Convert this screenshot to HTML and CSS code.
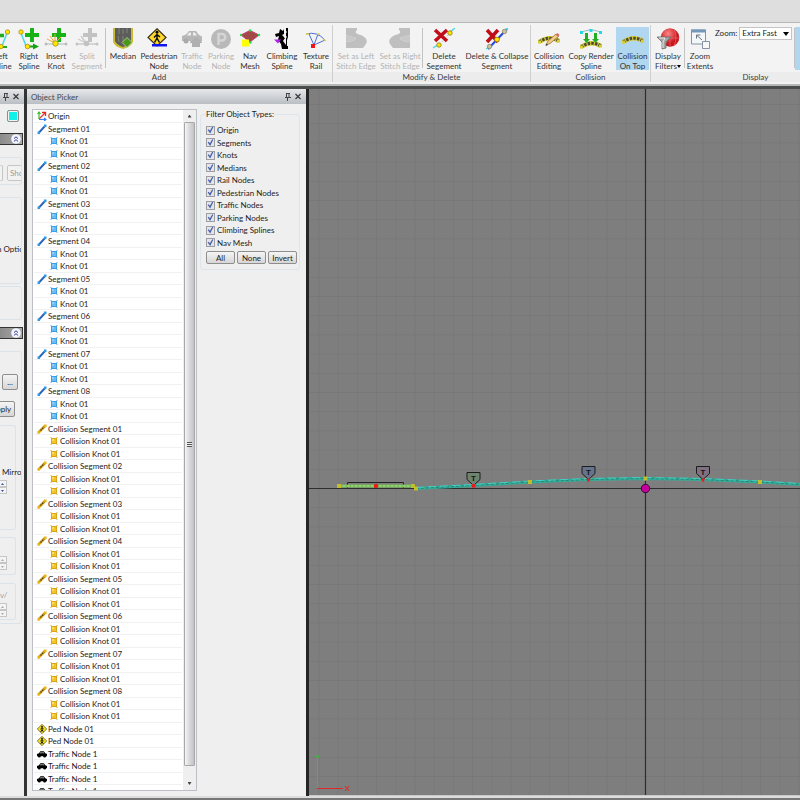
FILE: index.html
```html
<!DOCTYPE html>
<html lang="en">
<head>
<meta charset="utf-8">
<title>Object Picker</title>
<link rel="stylesheet" href="styles.css">
</head>
<body>
<svg class="defs" aria-hidden="true">
  <defs>
    <radialGradient id="redBall" cx=".4" cy=".3"><stop stop-color="#ff8a8a"/><stop offset="1" stop-color="#c8181e"/></radialGradient>
    <symbol id="t-origin" viewBox="0 0 10 10"><path d="M2 8l6-6" stroke="#e33" stroke-width="1.200"/><path d="M2 8V1.500M.5 3L2 1l1.500 2" fill="none" stroke="#2fc42f" stroke-width="1.200"/><path d="M2 8.500h6M7 7l2 1.500L7 10" fill="none" stroke="#3b7ff0" stroke-width="1.200"/><path d="M5 1.500h3.500V5" fill="none" stroke="#e22" stroke-width="1.300"/></symbol>
    <symbol id="t-segment" viewBox="0 0 10 10"><path d="M2 8.500L8.500 1.500" stroke="#2a62b8" stroke-width="1.900"/><path d="M.5 7.500h2.500v2.500H.5zM7 .5h2.500V3H7z" fill="#2f9be8"/></symbol>
    <symbol id="t-knot" viewBox="0 0 10 10"><path d="M2 2h6v6H2z" fill="#3d9ee2"/><path d="M3 3h4v4H3z" fill="#6bbcf2"/><path d="M3 3h2v2H3z" fill="#90d0f8"/><path d="M1 1h2v1H1zM7 1h2v1H7zM1 8h2v1H1zM7 8h2v1H7z" fill="#a9d4f0"/></symbol>
    <symbol id="t-csegment" viewBox="0 0 10 10"><path d="M1.500 8.500L8.500 1.500" stroke="#d6a516" stroke-width="2.600"/><path d="M3.500 6.500L7 3" stroke="#5b4614" stroke-width="1.400" stroke-dasharray="1.500 .8"/><path d="M.3 7.500h2.400v2.300H.3zM7.300.4h2.300v2.300H7.300z" fill="#efb91a"/></symbol>
    <symbol id="t-cknot" viewBox="0 0 10 10"><path d="M2 2h6v6H2z" fill="#dda41a"/><path d="M3 3h4v4H3z" fill="#f2c42c"/><path d="M3 3h2v2H3z" fill="#fae068"/><path d="M1 1h2v1H1zM7 1h2v1H7zM1 8h2v1H1zM7 8h2v1H7z" fill="#efd694"/></symbol>
    <symbol id="t-ped" viewBox="0 0 10 10"><path d="M5 .3L9.700 5 5 9.700.3 5z" fill="#f5e21f" stroke="#554d10" stroke-width=".7"/><circle cx="5" cy="2.500" r=".8"/><path d="M5 3.300v2.500l1.300 2M5 5.800L3.700 8M3.400 5.200L5 3.700l1.600 1.300" fill="none" stroke="#111"/></symbol>
    <symbol id="t-traffic" viewBox="0 0 10 10"><path d="M0 5L2 4.300 3.300 2.300h3.500l1.500 2 1.700.7V7.200H0z"/><path d="M3.600 3.200h1.200v1.100H2.900zM5.300 3.200h1.200l.8 1.100h-2z" fill="#ccc"/><circle cx="2.300" cy="7" r="1.500"/><circle cx="7.600" cy="7" r="1.500"/></symbol>
    <symbol id="pin" viewBox="0 0 8 8"><path d="M2 .5h4M2.500.5v4M5 .5v4M1 4.500h6M3.500 5v3" fill="none" stroke="#444"/></symbol>
    <symbol id="close" viewBox="0 0 8 8"><path d="M1.500 1l5 5M6.500 1l-5 5" stroke="#333" stroke-width="1.100"/></symbol>
    <symbol id="chev" viewBox="0 0 10 10"><circle cx="5" cy="5" r="4.800" fill="#f2f4ff"/><path d="M3 4.600L5 2.800l2 1.800M3 7.400l2-1.800 2 1.800" fill="none" stroke="#333d9c"/></symbol>
    <symbol id="plus" viewBox="0 0 12 12"><path d="M4.300 0h3.400v4.300H12v3.400H7.700V12H4.300V7.700H0V4.300h4.300z"/></symbol>
    <symbol id="road" viewBox="0 0 22 8"><path d="M1 6Q11-1 21 5" fill="none" stroke="#d4c832" stroke-width="4.500"/><path d="M1 6Q11-1 21 5" fill="none" stroke="#4a4a3a" stroke-width="3" stroke-dasharray="2.500 1.200"/><path d="M0 4.500h3v3H0zM19 3.500h3v3h-3z" fill="#d8cf35"/></symbol>
  </defs>
</svg>

<header class="titlebar"></header>

<nav class="ribbon" aria-label="Ribbon">
  <section class="group group-add">
    <div class="tools">
      <button class="tool w28"><svg viewBox="0 0 24 22"><use href="#plus" x="2" y="1" width="13" height="13" fill="#1fae1f"/><path d="M18 5L13 18" stroke="#48dbe6" stroke-width="1.500"/><path d="M4 19h14" stroke="#1fae1f" stroke-width="2"/><g fill="#ffe600" stroke="#a08400" stroke-width=".7"><circle cx="18.500" cy="4" r="2.200"/><circle cx="12" cy="18.500" r="2.200"/></g></svg><span>Left<br>Spline</span></button>
      <button class="tool w28"><svg viewBox="0 0 24 22"><use href="#plus" x="8" y="0" width="14" height="14" fill="#16b316"/><path d="M4 5L9 18" stroke="#48dbe6" stroke-width="1.500"/><path d="M11 18.500h6" stroke="#12a312" stroke-width="2"/><path d="M16 15.500l6 3-6 3z" fill="#12a312"/><g fill="#ffe600" stroke="#a08400" stroke-width=".7"><circle cx="4" cy="4" r="2.200"/><circle cx="10.500" cy="18.500" r="2.300"/></g></svg><span>Right<br>Spline</span></button>
      <button class="tool w26"><svg viewBox="0 0 24 22"><use href="#plus" x="8" y="0" width="14" height="14" fill="#16b316"/><path d="M2 16h20" stroke="#b5cbd0" stroke-width="1.300"/><path d="M11 15L6 8M11 15L3 11M11 15V6M11 15l6-6" stroke="#f0a838"/><g fill="#bcbcbc"><circle cx="2" cy="16" r="1.500"/><circle cx="22" cy="16" r="1.500"/></g><circle cx="11.500" cy="15.500" r="2.700" fill="#ffe600" stroke="#a08400" stroke-width=".7"/></svg><span>Insert<br>Knot</span></button>
      <button class="tool w36" disabled><svg viewBox="0 0 24 22"><use href="#plus" x="8" y="0" width="14" height="14" fill="#c2c2c2"/><path d="M2 16h20M11 15L6 8M11 15L3 11" stroke="#cbcbcb" stroke-width="1.300"/><g fill="#c2c2c2"><circle cx="2" cy="16" r="1.500"/><circle cx="22" cy="16" r="1.500"/><circle cx="11.500" cy="15.500" r="2.700"/></g></svg><span>Split<br>Segment</span></button>
      <i class="sep"></i>
      <button class="tool w34"><svg viewBox="0 0 24 22"><path d="M2 0h20v14q-2 5-10 7Q4 19 2 14z" fill="#c9bd2f"/><path d="M4 0h16v13q-2 4-8 6-6-2-8-6z" fill="#5c5c5a"/><path d="M8 0v6M12 1v5M16 0v5M7 8l1 6M12 8v5" stroke="#85857d"/><path d="M16 9.500l5 5-5 5-5-5z" fill="#4d961c" stroke="#d6e5b3" stroke-width=".7"/></svg><span>Median</span></button>
      <button class="tool w38"><svg viewBox="0 0 24 22"><path d="M10 .8L19 9.500 10 18 1 9.500z" fill="#ffd92e" stroke="#3c3418" stroke-width="1.200"/><circle cx="10" cy="4.200" r="1.400"/><path d="M10 5.500V10l2.500 4.500M10 10l-2.500 4.500M7 9.500l3-3 3 2.500" fill="none" stroke="#111" stroke-width="1.500"/><path d="M5 16h15v2.500H5z" fill="#1018f0"/></svg><span>Pedestrian<br>Node</span></button>
      <button class="tool w28" disabled><svg viewBox="0 0 24 22"><path d="M2 8l4-1.500L9 3h7l3 4 3 1.500V13H2z" fill="#b7b7b7"/><circle cx="6" cy="13" r="2.500" fill="#aaa"/><path d="M9 4.500L7 7.500h4v-3zM13 4.500v3h4l-2-3z" fill="#eee"/><path d="M16 9l6 5v1h-2v4h-8v-4h-2v-1z" fill="#b0b0b0"/></svg><span>Traffic<br>Node</span></button>
      <button class="tool w30" disabled><svg viewBox="0 0 24 22"><circle cx="12" cy="11" r="10" fill="#b9b9b9"/><path d="M9.500 17V6h3.500a3 3 0 0 1 0 6.500H9.500" fill="none" stroke="#d5d5d5" stroke-width="2.500"/></svg><span>Parking<br>Node</span></button>
      <button class="tool w28"><svg viewBox="0 0 24 22"><path d="M3 7l9-4.500L21 7l-9 7z" fill="#a14b49" stroke="#c23a72"/><g fill="#23df48"><circle cx="3" cy="7" r="1.200"/><circle cx="12" cy="2.500" r="1.200"/><circle cx="21" cy="7" r="1.200"/><circle cx="12.500" cy="14.500" r="1.200"/></g><path d="M4 11.500h7v7H4z" fill="#ff0"/></svg><span>Nav<br>Mesh</span></button>
      <button class="tool w36"><svg viewBox="0 0 24 22"><path d="M10 1l3 2 1-2v5l-2 1 3 3-2 3 3 4v4h-4l-1-5-3-4 1-4-3 1-1-3 4-1z"/><path d="M17 0l1 0v9l-1 3v9h-1V0zM12 18h6v3h-6z"/><path d="M14 4h3M14 9h3" stroke="#fff"/><path d="M4 11.500h7l-3 4z" fill="#b220e8"/></svg><span>Climbing<br>Spline</span></button>
      <button class="tool w32"><svg viewBox="0 0 24 22"><path d="M2 6Q13 3 21 12M10 17L5 6M10 17l4-11M10 17l11-5" fill="none" stroke="#4a6cda"/><path d="M2 6h3M13 6h3M19 11l3 2" stroke="#e0d542" stroke-width="1.500"/><path d="M7 16h4v4H7z" fill="#f01616"/></svg><span>Texture<br>Rail</span></button>
    </div>
    <h2>Add</h2>
  </section>
  <section class="group">
    <div class="tools">
      <button class="tool w44" disabled><svg viewBox="0 0 24 22"><path d="M2 0h11v2Q9 5 17 7q8 4 5 9l-3 4H2V14q10-1 10-4L2 7z" fill="#bfbfbf"/><path d="M2 7l10 3q0 3-10 4z" fill="#c8c8c8"/></svg><span>Set as Left<br>Stitch Edge</span></button>
      <button class="tool w44" disabled><svg viewBox="0 0 24 22"><path d="M22 0H11v2q4 3-4 5-8 4-5 9l3 4h17v-6q-10-1-10-4l10-3z" fill="#bfbfbf"/><path d="M22 7l-10 3q0 3 10 4z" fill="#c8c8c8"/></svg><span>Set as Right<br>Stitch Edge</span></button>
      <i class="sep"></i>
      <button class="tool w42"><svg viewBox="0 0 24 22"><path d="M1 20l6-4M17 5l6-5" stroke="#48dbe6" stroke-width="1.500"/><path d="M7 17l11-12" stroke="#bbb" stroke-dasharray="2 2"/><path d="M3 2l12 11M15 2L3 13" stroke="#c00d17" stroke-width="3.500"/><g fill="#ffe600" stroke="#8f7a10" stroke-width=".8"><circle cx="18" cy="5" r="2.200"/><circle cx="7" cy="17" r="2.200"/></g></svg><span>Delete<br>Segement</span></button>
      <button class="tool w63"><svg viewBox="0 0 24 22"><path d="M3 21L22 1" stroke="#2349dd" stroke-width="2"/><path d="M1 21l3-2M20 2l3-2" stroke="#48dbe6" stroke-width="1.500"/><path d="M2 2l11 12M13 2L2 14" stroke="#c00d17" stroke-width="3.500"/><g fill="#c9c3a0" stroke="#8d8767" stroke-width=".8"><circle cx="19.500" cy="3.500" r="2.200"/><circle cx="4.500" cy="18.500" r="2.200"/></g><circle cx="12" cy="11.500" r="2.400" fill="#ffe600" stroke="#8f7a10" stroke-width=".8"/></svg><span>Delete &amp; Collapse<br>Segment</span></button>
    </div>
    <h2>Modify &amp; Delete</h2>
  </section>
  <section class="group">
    <div class="tools">
      <button class="tool w34"><svg viewBox="0 0 24 22"><use href="#road" x="1" y="8" width="22" height="8"/><path d="M9 17l2-4 8-7 2.500 2.500-8.500 7z" fill="#f1cd8c" stroke="#9a7030" stroke-width=".8"/><path d="M18.500 6.500l2-1.500 2 2-1.500 2z" fill="#d86b62"/><path d="M8.500 18l1-2.500 1.500 1.500z" fill="#333"/></svg><span>Collision<br>Editing</span></button>
      <button class="tool w50"><svg viewBox="0 0 24 22"><path d="M2 4l10-2.500L22 4" fill="none" stroke="#9bb8c4"/><g fill="#20d8ea"><path d="M1 3h3v3H1zM10.500 1h3v3h-3zM20 3h3v3h-3z"/></g><use href="#road" x="1" y="13" width="22" height="8"/><path d="M6 5h3v6h2l-3.500 4L4 11h2zM15 5h3v6h2l-3.500 4-3.500-4h2z" fill="#23ad24"/></svg><span>Copy Render<br>Spline</span></button>
      <button class="tool w33 on"><svg viewBox="0 0 24 22"><use href="#road" x="1" y="8" width="22" height="8"/></svg><span>Collision<br>On Top</span></button>
    </div>
    <h2>Collision</h2>
  </section>
  <section class="group group-display">
    <div class="tools">
      <button class="tool w32"><svg viewBox="0 0 24 22"><circle cx="14" cy="9.500" r="9.300" fill="url(#redBall)"/><path d="M9 2q5 8 0 15M5 10h18M14 0v18M18 1q4 8 0 17" fill="none" stroke="#e96a6e" stroke-width=".7"/><path d="M1 9h14l-5 5v6l-4 1v-7z" fill="#a3a3a3" stroke="#6a6a6a" stroke-width=".8"/><path d="M3 10h6l-2 4v6" fill="none" stroke="#e8e8e8"/></svg><span>Display<br>Filters<svg class="caret" viewBox="0 0 4 3"><path d="M0 0h4L2 3z"/></svg></span></button>
      <i class="sep"></i>
      <button class="tool w30"><svg viewBox="0 0 24 22"><path d="M3.500 2h14v14h-14z" fill="#f4f7fa" stroke="#8793a2"/><path d="M3 1.500h15v3H3z" fill="#7497bb"/><path d="M14.500 13.500h7v7h-7z" fill="#f7f7f7" stroke="#8793a2"/><path d="M14 12L9 7.500M8.500 10.500V7h4" fill="none" stroke="#6b737f"/></svg><span>Zoom<br>Extents</span></button>
      <div class="zoom"><label for="zoom">Zoom:</label><div class="select"><select id="zoom"><option>Extra Fast</option></select><svg viewBox="0 0 6 4"><path d="M0 0h6L3 4z"/></svg></div></div>
      <i class="sep"></i>
      <button class="tool w34 on"><svg viewBox="0 0 24 22"><circle cx="10" cy="11" r="8" fill="#bd8"/></svg><span>Grid</span></button>
    </div>
    <h2>Display</h2>
  </section>
</nav>

<main class="workspace">
  <aside class="props">
    <div class="panel-title"><svg><use href="#pin"/></svg><svg><use href="#close"/></svg></div>
    <div class="props-body">
      <div class="swatch-row"><button class="swatch" aria-label="Colour"></button></div>
      <div class="bar"><svg><use href="#chev"/></svg></div>
      <div class="box box-buttons"><button class="btn stub" disabled></button><button class="btn show" disabled>Show</button></div>
      <div class="box box-options"><span>n Options</span></div>
      <div class="box box-tail"></div>
      <div class="bar"><svg><use href="#chev"/></svg></div>
      <div class="box box-apply">
        <div class="row row-more"><button class="btn">...</button></div>
        <div class="row row-apply"><button class="btn">Apply</button></div>
        <div class="inner inner-mirror"><p>Mirro</p><span class="spin live"><b></b><b></b></span></div>
        <div class="inner inner-mid"><span class="spin"><b></b><b></b></span></div>
        <div class="inner inner-end"><p>v/</p><span class="spin"><b></b><b></b></span></div>
      </div>
    </div>
  </aside>

  <aside class="picker">
    <div class="panel-title"><h1>Object Picker</h1><svg><use href="#pin"/></svg><svg><use href="#close"/></svg></div>
    <div class="picker-body">
      <div class="list">
        <ul class="tree" id="tree"></ul>
        <div class="scroll"><span class="arrow up"></span><div class="thumb"><i></i></div><span class="arrow down"></span></div>
      </div>
      <fieldset class="filters">
        <legend>Filter Object Types:</legend>
        <label><input type="checkbox" checked>Origin</label>
        <label><input type="checkbox" checked>Segments</label>
        <label><input type="checkbox" checked>Knots</label>
        <label><input type="checkbox" checked>Medians</label>
        <label><input type="checkbox" checked>Rail Nodes</label>
        <label><input type="checkbox" checked>Pedestrian Nodes</label>
        <label><input type="checkbox" checked>Traffic Nodes</label>
        <label><input type="checkbox" checked>Parking Nodes</label>
        <label><input type="checkbox" checked>Climbing Splines</label>
        <label><input type="checkbox" checked>Nav Mesh</label>
        <div class="actions"><button class="btn">All</button><button class="btn">None</button><button class="btn">Invert</button></div>
      </fieldset>
    </div>
  </aside>

  <section class="viewport" aria-label="Viewport">
    <svg class="scene">
      <defs><pattern id="grid" x="9.500" y="15" width="19.200" height="19.200" patternUnits="userSpaceOnUse"><path d="M.5 0v19.200M0 .5h19.200" stroke="#787878" fill="none"/></pattern></defs>
      <rect width="100%" height="100%" fill="url(#grid)"/>
      <path d="M0 399.500h1600M336.500 0v1200" stroke="#2e2e2e" stroke-width="1.200"/>
      <path d="M38.500 399.500V393.500h56v6" fill="none" stroke="#222"/>
      <path d="M30 397h74" stroke="#79b858" stroke-width="3.200"/><path d="M30 397h74" stroke="#a5f07c" stroke-dasharray="2.500 1.500"/>
      <path d="M107 399.500L164 396.500 221 393 279 390.500 336.500 389.500 393 390.500 451 393 491 395.500 560 399" fill="none" stroke="#35ad99" stroke-width="2.800"/>
      <path d="M107 399.500L164 396.500 221 393 279 390.500 336.500 389.500 393 390.500 451 393 491 395.500 560 399" fill="none" stroke="#208573" stroke-dasharray="3 2"/>
      <path d="M107 398.500L164 395.500 221 392 279 389.500 336.500 388.500 393 389.500 451 392 491 394.500 560 398" fill="none" stroke="#4cd6d0" stroke-width=".8" stroke-dasharray="8 4"/>
      <path d="M28 395h4v4h-4zM102 395h4v4h-4zM105 397.500h4v4h-4zM219 391h4v4h-4zM334.500 387.500h4v4h-4zM449 391h4v4h-4z" fill="#c2bd2b"/>
      <circle cx="67" cy="397" r="2.200" fill="#f01818"/>
      <g stroke="#1c1c1c"><path d="M158 383.500h13v7l-6.500 6-6.500-6z" fill="#6f8470"/><path d="M273 377.500h13v7l-6.500 6-6.500-6z" fill="#65748a"/><path d="M387.500 377.500h13v7l-6.500 6-6.500-6z" fill="#7d7183"/></g>
      <g class="marker"><text x="164.500" y="392">T</text><text x="279.500" y="386">T</text><text x="394" y="386">T</text></g>
      <path d="M163 395h3.500v3.500H163zM277.500 389.500h4l-1 3h-2zM392 389.500h4l-1 3h-2z" fill="#e81c1c"/>
      <circle cx="336.500" cy="399.500" r="4.200" fill="#c4009c" stroke="#3d0633"/>
      <path d="M8.500 699V671" stroke="#35c235"/><path d="M6.500 666l2 3 2-3M8.500 669v3" stroke="#35c235" fill="none"/>
      <path d="M8 699.500h26M36 697l4 5M40 697l-4 5" stroke="#dc2a2a" fill="none"/>
    </svg>
  </section>
</main>
<footer class="statusbar"></footer>
<script src="script.js"></script>
</body>
</html>
```
FILE: styles.css
```css
* { box-sizing: border-box; margin: 0; padding: 0; }
html, body { height: 100%; }
body {
  display: flex;
  flex-direction: column;
  overflow: hidden;
  background: #efefef;
  color: #1c1c1c;
  font: 8px/10px Lato, "Open Sans", sans-serif;
}
button, select, input { font: inherit; color: inherit; border: 0; background: none; }
svg { display: block; }
h1, h2 { font-size: 8px; font-weight: 400; }
.defs { position: absolute; width: 0; height: 0; }

.titlebar { flex: none; height: 23px; background: #dedede; border-bottom: 1px solid #b9b9b9; }

/* Ribbon */
.ribbon {
  flex: none;
  display: flex;
  height: 66px;
  padding-top: 2px;
  overflow: hidden;
  background: #f3f3f3;
  border-bottom: 3px solid #4b4d4d;
  box-shadow: inset 0 -2px #b4b8b6;
}
.group { flex: none; border-right: 1px solid #cfcfcf; height: 57px; }
.group-add { margin-left: -14px; }
.group-display { width: 210px; }
.tools { display: flex; height: 47px; padding: 2px 1px 0; }
.group-add .tools { padding-right: 0; }
.group h2 { background: #ececec; text-align: center; height: 10px; color: #3a3a3a; }
.tool {
  flex: none;
  display: flex;
  flex-direction: column;
  align-items: center;
  gap: 1px;
  height: 43px;
  padding-top: 1px;
  color: #333;
  text-align: center;
  white-space: nowrap;
}
.tool > svg { width: 24px; height: 22px; flex: none; }
.tool:disabled { color: #b3b3b3; }
.tool.on { background: #b1d6f0; }
.sep { flex: none; width: 1px; height: 40px; margin-top: 1px; background: #c3c3c3; }
.caret { display: inline-block; width: 4px; height: 3px; vertical-align: middle; }
.w26 { width: 26px; } .w28 { width: 28px; } .w30 { width: 30px; } .w32 { width: 32px; }
.w33 { width: 33px; } .w34 { width: 34px; } .w36 { width: 36px; } .w38 { width: 38px; }
.w42 { width: 42px; } .w44 { width: 44px; } .w50 { width: 50px; } .w63 { width: 64px; }
.zoom { display: flex; gap: 2px; width: 79px; line-height: 13px; }
.select { position: relative; width: 53px; }
.select select {
  appearance: none;
  display: block;
  width: 100%;
  height: 13px;
  padding-left: 2px;
  background: #fff;
  border: 1px solid #c4c4c4;
  line-height: 11px;
}
.select svg { position: absolute; right: 3px; top: 5px; width: 6px; height: 4px; pointer-events: none; }

/* Docked panels */
.workspace { flex: 1; display: flex; min-height: 0; background: #efefef; }
.panel-title {
  flex: none;
  display: flex;
  align-items: center;
  justify-content: flex-end;
  gap: 2px;
  height: 15px;
  padding: 0 4px;
  background: linear-gradient(#e6e8ea, #b9bec4);
}
.panel-title svg { width: 8px; height: 8px; }
.panel-title h1 { flex: 1; color: #444a52; }
.btn {
  height: 13px;
  border: 1px solid #8e8e8e;
  border-radius: 2px;
  background: linear-gradient(#f5f5f5, #d6d6d6);
  line-height: 10px;
}
.btn:disabled { color: #9a9a9a; border-color: #c6c6c6; background: #f2f2f2; }

.props { flex: none; width: 27px; border-right: 3px solid #343434; overflow: hidden; }
.props .panel-title { padding: 0 4px 0 0; }
.props-body { width: 23px; }
.swatch-row { display: flex; justify-content: flex-end; height: 29px; padding: 6px 4px 0 0; }
.swatch { flex: none; width: 12px; height: 12px; background: #0ff0e8; border: 1px solid #8c8c8c; border-radius: 2px; box-shadow: inset 0 0 0 1px #f3f3f3; }
.bar { display: flex; justify-content: flex-end; align-items: center; height: 12px; padding-right: 1px; border: 1px solid #333; border-left: 0; background: linear-gradient(90deg, #8b8b8b, #aaa); }
.bar svg { width: 10px; height: 10px; }
.box { display: flex; border: 1px solid #dbe2e8; border-left: 0; border-radius: 0 3px 3px 0; width: 22px; overflow: hidden; }
.box-buttons { height: 28px; margin-top: 12px; padding-top: 7px; gap: 4px; }
.box-buttons .btn { flex: none; height: 16px; }
.stub { width: 3px; border-left: 0; }
.show { width: 30px; padding-left: 2px; text-align: left; }
.box-options { height: 87px; margin-top: 12px; padding-top: 46px; white-space: nowrap; }
.box-options span { margin-left: -3px; }
.box-tail { height: 34px; margin-top: 2px; }
.props-body .box-tail + .bar { margin-top: 7px; }
.box-apply { flex-direction: column; height: 273px; margin-top: 12px; }
.row { display: flex; justify-content: flex-end; flex: none; }
.row-more { height: 27px; padding-right: 3px; margin-top: 22px; }
.row-apply { height: 24px; padding-right: 6px; }
.row .btn { flex: none; height: 16px; }
.row-more .btn { width: 16px; }
.row-apply .btn { width: 28px; }
.inner { flex: none; width: 16px; border: 1px solid #dbe2e8; border-left: 0; border-radius: 0 3px 3px 0; }
.inner-mirror { height: 105px; padding-top: 41px; }
.inner-mirror p { padding-left: 2px; }
.inner-mid { height: 38px; margin-top: 7px; padding-top: 18px; }
.inner-end { height: 37px; margin-top: 8px; padding-top: 6px; color: #a0a0a0; }
.spin { display: block; width: 7px; margin-top: 3px; }
.inner-mid .spin { margin-top: 0; }
.spin b { display: flex; height: 7px; border: 1px solid #c5c5c5; border-left: 0; background: #f4f4f4; }
.spin b::after { content: ""; width: 3px; height: 2px; margin: 2px 0 0 1px; background: #aaa; clip-path: polygon(50% 0, 100% 100%, 0 100%); }
.spin b:last-child::after { clip-path: polygon(0 0, 100% 0, 50% 100%); }
.spin.live b::after { background: #3c4f9c; }

.picker { flex: none; display: flex; flex-direction: column; width: 282px; border-right: 3px solid #242424; }
.picker-body { flex: 1; min-height: 0; display: flex; align-items: flex-start; gap: 3px; padding: 5px 6px 5px 5px; }
.list { align-self: stretch; flex: none; display: flex; width: 165px; overflow: hidden; background: #fff; border: 1px solid #bcbfc3; }
.tree { flex: 1; list-style: none; padding: 0 1px; overflow: hidden; }
.tree li { display: flex; align-items: center; gap: 1px; height: 13px; padding-left: 3px; border-bottom: 1px solid #f1f1f1; white-space: nowrap; }
.tree li:nth-child(even) { height: 12px; }
.tree svg { flex: none; width: 10px; height: 10px; }
.tree .child { padding-left: 15px; }
.scroll { flex: none; display: flex; flex-direction: column; width: 13px; background: #efefef; }
.arrow { height: 12px; display: flex; align-items: center; justify-content: center; }
.arrow::after { content: ""; width: 4px; height: 3px; background: #444; clip-path: polygon(50% 0, 100% 100%, 0 100%); }
.down::after { clip-path: polygon(0 0, 100% 0, 50% 100%); }
.down { height: 24px; padding-top: 11px; }
.thumb { flex: 1; display: flex; align-items: center; justify-content: center; margin: 0 1px; border: 1px solid #a8a8a8; border-radius: 1px; background: linear-gradient(90deg, #f5f5f5, #d9d9dc 50%, #c2c2c8); }
.thumb i { width: 5px; height: 5px; background: repeating-linear-gradient(#555 0 1px, #eee 1px 2px); }

.filters { flex: 1; min-width: 0; display: flex; flex-direction: column; height: 161px; padding: 5px 0 0 5px; border: 1px solid #dce6ec; border-radius: 3px; }
.filters legend { white-space: nowrap; }
.filters label { display: flex; align-items: center; gap: 2px; height: 12px; white-space: nowrap; }
.filters label:nth-of-type(even) { height: 13px; }
.filters input { appearance: none; flex: none; width: 9px; height: 9px; border: 1px solid #9c9ea2; background: #e3e5ea; }
.filters input:checked::before { content: ""; display: block; width: 7px; height: 7px; background: #4a62ac; clip-path: polygon(10% 50%, 25% 38%, 42% 62%, 75% 5%, 90% 12%, 45% 100%); }
.actions { display: flex; gap: 2px; margin-top: 2px; }
.actions .btn { width: 29px; }

/* Viewport */
.viewport { flex: 1; min-width: 0; overflow: hidden; background: #7e7e7e; border-bottom: 1px solid #c9c9c9; }
.scene { width: 100%; height: 100%; }
.marker { fill: #161616; text-anchor: middle; font: 700 8px "Liberation Sans", sans-serif; }
.statusbar { flex: none; height: 4px; background: #777; border-top: 2px solid #dcdcdc; }
```
FILE: script.js
```js
const pad = n => String(n).padStart(2, "0");
const rows = [["origin", "Origin"]];
for (let i = 1; i <= 8; i++) {
  rows.push(["segment", "Segment " + pad(i)], ["knot", "Knot 01"], ["knot", "Knot 01"]);
}
for (let i = 1; i <= 8; i++) {
  rows.push(["csegment", "Collision Segment " + pad(i)], ["cknot", "Collision Knot 01"], ["cknot", "Collision Knot 01"]);
}
rows.push(["ped", "Ped Node 01"], ["ped", "Ped Node 01"]);
for (let i = 0; i < 4; i++) rows.push(["traffic", "Traffic Node 1"]);

document.getElementById("tree").innerHTML = rows.map(([icon, text]) =>
  `<li${icon.endsWith("knot") ? ' class="child"' : ""}><svg><use href="#t-${icon}"/></svg><span>${text}</span></li>`
).join("");
```
